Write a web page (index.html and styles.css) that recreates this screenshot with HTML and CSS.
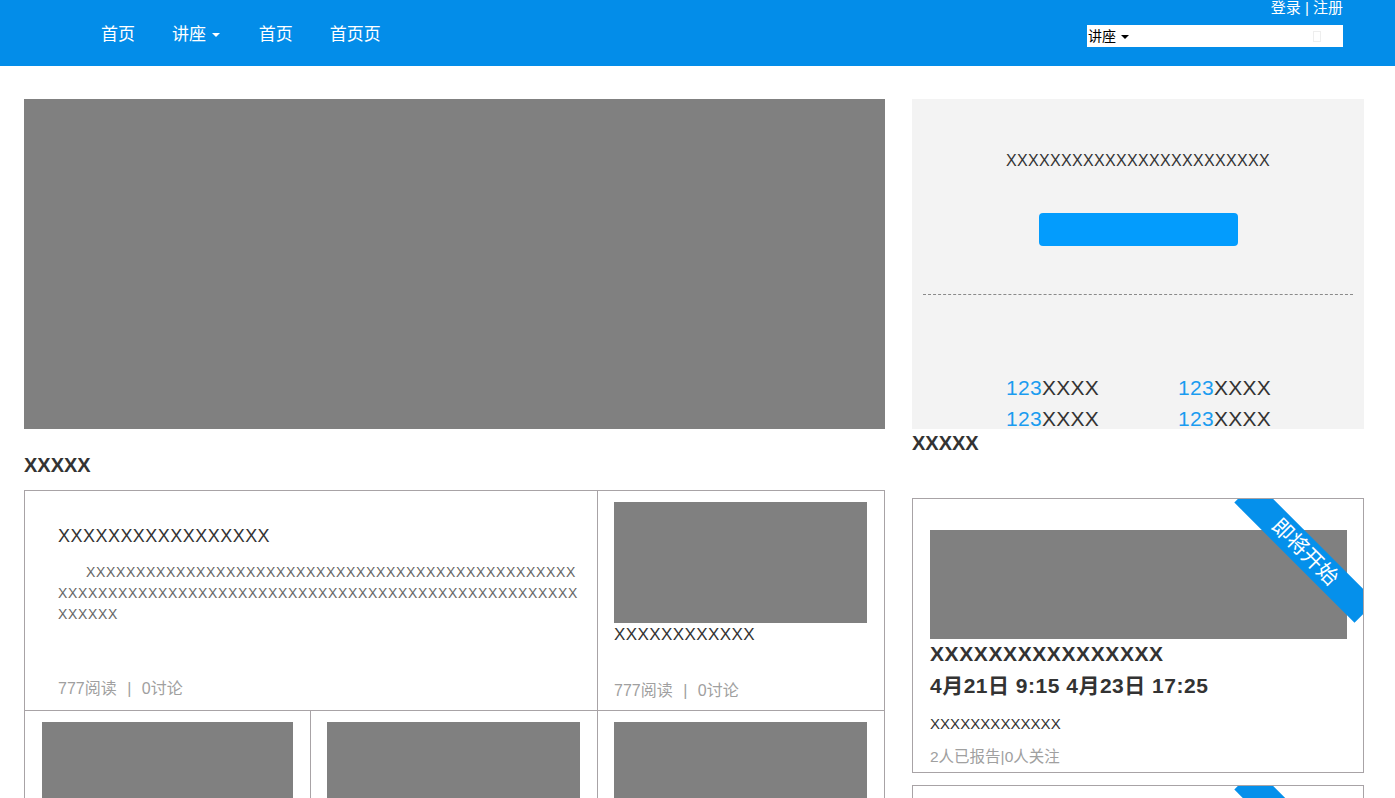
FILE: index.html
```html
<!DOCTYPE html>
<html lang="zh">
<head>
<meta charset="utf-8">
<title>讲座</title>
<link rel="stylesheet" href="styles.css">
</head>
<body>
<header class="nav">
  <ul class="nav-menu">
    <li>首页</li>
    <li>讲座 <span class="caret caret-nav"></span></li>
    <li>首页</li>
    <li>首页页</li>
  </ul>
  <div class="nav-right">
    <div class="auth">登录 | 注册</div>
    <div class="search">
      <span class="search-cat">讲座 <span class="caret caret-dark"></span></span>
      <span class="search-icon"></span>
    </div>
  </div>
</header>

<main class="main">
  <section class="left">
    <div class="banner"></div>
    <h2 class="sec-title left-title">XXXXX</h2>
    <div class="grid">
      <div class="cell cell-wide">
        <h3 class="art-title">XXXXXXXXXXXXXXXXX</h3>
        <p class="art-text">XXXXXXXXXXXXXXXXXXXXXXXXXXXXXXXXXXXXXXXXXXXXXXXXXXXXXXXXXXXXXXXXXXXXXXXXXXXXXXXXXXXXXXXXXXXXXXXXXXXXXXXXXXX</p>
        <div class="meta meta-wide">777阅读 <span class="sep">|</span> 0讨论</div>
      </div>
      <div class="cell cell-pic">
        <div class="pic"></div>
        <div class="pic-title">XXXXXXXXXXXX</div>
        <div class="meta meta-pic">777阅读 <span class="sep">|</span> 0讨论</div>
      </div>
      <div class="cell cell-pic cell-low cell-first"><div class="pic"></div></div>
      <div class="cell cell-pic cell-low"><div class="pic"></div></div>
      <div class="cell cell-pic cell-low"><div class="pic"></div></div>
    </div>
  </section>

  <aside class="right">
    <div class="panel">
      <div class="panel-text">XXXXXXXXXXXXXXXXXXXXXXXX</div>
      <div class="panel-btn"></div>
      <div class="dashed"></div>
      <div class="stats">
        <div class="stat"><span class="num">123</span>XXXX</div>
        <div class="stat"><span class="num">123</span>XXXX</div>
        <div class="stat"><span class="num">123</span>XXXX</div>
        <div class="stat"><span class="num">123</span>XXXX</div>
      </div>
    </div>
    <h2 class="sec-title right-title">XXXXX</h2>
    <div class="card">
      <div class="ribbon">即将开始</div>
      <div class="card-pic"></div>
      <div class="card-title">XXXXXXXXXXXXXXXX</div>
      <div class="card-date">4月21日 9:15 4月23日 17:25</div>
      <div class="card-desc">XXXXXXXXXXXXX</div>
      <div class="card-meta">2人已报告|0人关注</div>
    </div>
    <div class="card">
      <div class="ribbon">即将开始</div>
    </div>
  </aside>
</main>
</body>
</html>
```

FILE: styles.css
```css
* { box-sizing: border-box; }
html, body { margin: 0; padding: 0; }
body {
  font-family: "Liberation Sans", "Noto Sans CJK SC", sans-serif;
  color: #333;
  background: #fff;
  overflow: hidden;
  height: 798px;
}
h2, h3, p, ul { margin: 0; padding: 0; }
ul { list-style: none; }

/* nav */
.nav {
  height: 66px;
  background: #038de9;
  display: flex;
  justify-content: space-between;
  padding-left: 101px;
  padding-right: 52px;
}
.nav-menu {
  display: flex;
  align-items: center;
  gap: 37px;
  color: #fff;
  font-size: 17px;
  height: 66px;
  padding-bottom: 2px;
}
.nav-menu li { white-space: nowrap; }
.caret {
  display: inline-block;
  width: 0;
  height: 0;
  border-left: 4px solid transparent;
  border-right: 4px solid transparent;
  border-top: 4px solid #fff;
  vertical-align: middle;
  margin-left: 1px;
}
.caret-nav { margin-right: 2px; }
.caret-dark { border-top-color: #000; }
.nav-right {
  width: 256px;
  display: flex;
  flex-direction: column;
  align-items: flex-end;
}
.auth {
  color: #fff;
  font-size: 15px;
  line-height: 16px;
  white-space: nowrap;
}
.search {
  margin-top: 9px;
  width: 256px;
  height: 22px;
  background: #fff;
  display: flex;
  align-items: center;
  justify-content: space-between;
  padding: 0 22px 0 1px;
}
.search-cat { color: #000; font-size: 14px; line-height: 22px; }
.search-icon {
  width: 8px;
  height: 11px;
  border: 1px solid #eee;
}

/* main */
.main {
  display: flex;
  gap: 27px;
  padding: 33px 0 0 24px;
}
.left { width: 861px; }
.right { width: 452px; }
.banner { height: 330px; background: #808080; }
.sec-title {
  font-size: 20px;
  font-weight: bold;
  line-height: 24px;
  color: #333;
}
.left-title { margin: 24px 0 13px; }
.right-title { margin: 2px 0 43px; }

.grid {
  display: grid;
  grid-template-columns: 286px 287px 287px;
  border-top: 1px solid #a8a3a6;
  border-left: 1px solid #a8a3a6;
}
.cell {
  border-right: 1px solid #a8a3a6;
  border-bottom: 1px solid #a8a3a6;
}
.cell-wide {
  grid-column: span 2;
  height: 220px;
  padding: 33px 18px 0 33px;
  display: flex;
  flex-direction: column;
}
.art-title {
  font-size: 18px;
  font-weight: normal;
  letter-spacing: 0.47px;
  line-height: 24px;
  color: #333;
}
.art-text {
  margin-top: 14px;
  font-size: 14px;
  letter-spacing: 0.66px;
  line-height: 21px;
  color: #666;
  text-indent: 28px;
  word-break: break-all;
}
.meta { font-size: 16px; color: #a0a0a0; line-height: 20px; white-space: nowrap; }
.sep { margin: 0 6px; }
.meta-wide { margin-top: auto; margin-bottom: 11px; }
.cell-pic { padding: 11px 17px 0 16px; }
.pic { height: 121px; background: #808080; }
.cell-low { height: 90px; }
.cell-low .pic { height: 100px; }
.cell-first { padding-left: 17px; }
.pic-title {
  font-size: 17px;
  letter-spacing: 0.4px;
  line-height: 24px;
  color: #333;
}
.meta-pic { margin-top: 34px; }

/* right panel */
.panel {
  height: 330px;
  background: #f3f3f3;
  padding: 11px 11px 0;
  display: flex;
  flex-direction: column;
  align-items: center;
  overflow: hidden;
}
.panel > * { flex-shrink: 0; }
.panel-text {
  margin-top: 41px;
  font-size: 16px;
  letter-spacing: 0.33px;
  line-height: 20px;
  color: #333;
}
.panel-btn {
  margin-top: 42px;
  width: 199px;
  height: 33px;
  background: #039cfd;
  border-radius: 4px;
}
.dashed {
  margin-top: 48px;
  width: 100%;
  border-top: 1px dashed #8a8a8a;
}
.stats {
  align-self: flex-start;
  margin-top: 77px;
  margin-left: 83px;
  display: grid;
  grid-template-columns: 172px 172px;
}
.stat {
  font-size: 21px;
  letter-spacing: 0.3px;
  line-height: 31px;
  color: #333;
  white-space: nowrap;
}
.num { color: #1a9cf0; }

/* event card */
.card {
  position: relative;
  overflow: hidden;
  border: 1px solid #a8a3a6;
  height: 275px;
  padding: 31px 16px 0 17px;
  margin-bottom: 12px;
}
.card-pic { height: 109px; background: #808080; }
.card-title {
  margin-top: 2px;
  font-size: 21px;
  font-weight: bold;
  letter-spacing: 0.6px;
  line-height: 26px;
  color: #333;
}
.card-date {
  margin-top: 6px;
  font-size: 21px;
  font-weight: bold;
  letter-spacing: 0.5px;
  line-height: 26px;
  color: #333;
}
.card-desc {
  margin-top: 15px;
  font-size: 15px;
  letter-spacing: 0.05px;
  line-height: 20px;
  color: #333;
}
.card-meta {
  margin-top: 13px;
  font-size: 15.5px;
  line-height: 20px;
  color: #a0a0a0;
  white-space: nowrap;
}
.ribbon {
  position: absolute;
  left: 307px;
  top: 38px;
  width: 170px;
  height: 30px;
  background: #0590eb;
  color: #fff;
  font-size: 21px;
  line-height: 30px;
  text-align: center;
  transform: rotate(45deg);
}
```
